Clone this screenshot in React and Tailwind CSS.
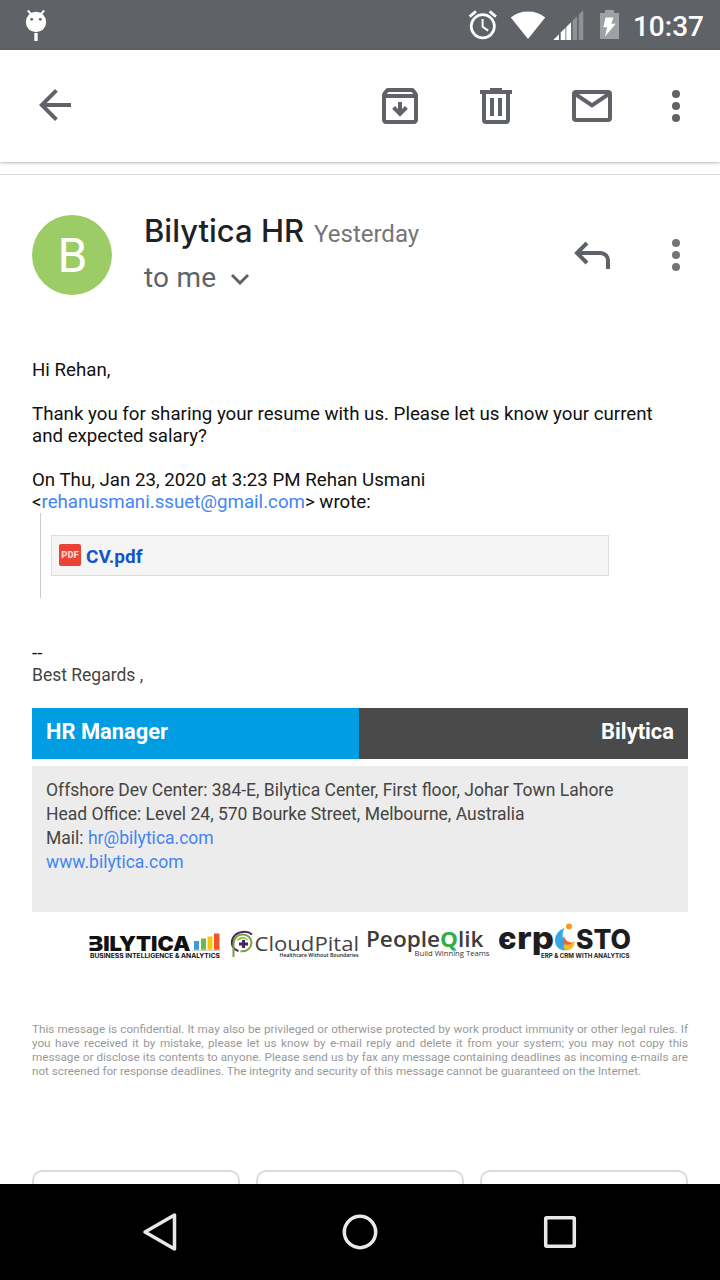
import React from "react";

const GREY = "#5f6368";

function StatusBar() {
  return (
    <header className="flex h-[50px] shrink-0 items-center justify-between bg-[#5f6267] pr-4 pl-6">
      <svg width="24" height="50" viewBox="24 0 24 50" fill="#fff">
        <circle cx="36" cy="22" r="10.2" />
        <path d="M31.5 14.5 28.3 11M40.5 14.5 43.7 11" stroke="#fff" strokeWidth="2" strokeLinecap="round" />
        <circle cx="31.7" cy="19.3" r="1.4" fill="#5f6267" />
        <circle cx="40.3" cy="19.3" r="1.4" fill="#5f6267" />
        <rect x="34.3" y="33" width="3.4" height="8" />
      </svg>
      <div className="flex items-center gap-[14px]">
        <svg width="151" height="50" viewBox="468 0 151 50">
          <g fill="none" stroke="#fff">
            <circle cx="482.8" cy="26.3" r="11.6" strokeWidth="2.7" />
            <path d="M482.6 19v7.8l5.6 3.8" strokeWidth="2" />
            <path d="M469.6 16.6 476 11.4M496 16.6 489.6 11.4" strokeWidth="2.8" />
          </g>
          <path d="M528 39 510.8 17.4a28 28 0 0 1 34.4 0z" fill="#fff" />
          <path d="M553.3 40 559 34.3V40zM560.7 40V32.6l4.8-4.8V40zM566.3 40V27l4.8-4.8V40z" fill="#fff" />
          <path d="M572.7 40V20.6l4.4-4.4V40zM578.7 40V14.6l4.6-4.6V40z" fill="#8f9194" />
          <path d="M600 13h5v-3h9v3h5v26h-19z" fill="#9fa1a4" />
          <path d="M605.5 17.5h8l-2.2 6.3h4.5L605 36.5l2.2-9.3h-3.8z" fill="#fff" />
        </svg>
        <span className="mt-[3px] text-[28px] leading-[32px] font-medium text-white">10:37</span>
      </div>
    </header>
  );
}

function Dots({ color }) {
  return (
    <svg width="8" height="32" viewBox="0 0 8 32" fill={color}>
      <circle cx="4" cy="4" r="4" />
      <circle cx="4" cy="16" r="4" />
      <circle cx="4" cy="28" r="4" />
    </svg>
  );
}

function Toolbar() {
  return (
    <nav className="flex h-[112px] shrink-0 items-center bg-white pr-10 pl-[31px] shadow-[0_1px_3px_rgba(0,0,0,0.28)]">
      <svg className="mb-[2px]" width="48" height="48" viewBox="0 0 24 24" fill={GREY}>
        <path d="M20 11H7.83l5.59-5.59L12 4l-8 8 8 8 1.41-1.41L7.83 13H20v-2z" />
      </svg>
      <div className="ml-auto flex items-center">
        <svg width="48" height="48" viewBox="0 0 48 48" fill="none" stroke={GREY} strokeWidth="4">
          <path
            transform="scale(2)"
            stroke="none"
            fill={GREY}
            d="M20.54 5.23l-1.39-1.68C18.88 3.21 18.47 3 18 3H6c-.47 0-.88.21-1.16.55L3.46 5.23C3.17 5.57 3 6.02 3 6.5V19c0 1.1.9 2 2 2h14c1.1 0 2-.9 2-2V6.5c0-.48-.17-.93-.46-1.27zM6.24 5h11.52l.83 1H5.42l.82-1zM5 19V8h14v11H5z"
          />
          <path d="M24 20v11M17.6 25.4 24 31.8l6.4-6.4" />
        </svg>
        <svg className="ml-12" width="48" height="48" viewBox="472 82 48 48" fill={GREY}>
          <path d="M480 90h10v-2h12v2h10v4h-32zM490 98h4v18h-4zM498 98h4v18h-4z" />
          <path d="M484 93v27a2 2 0 0 0 2 2h20a2 2 0 0 0 2-2V93" fill="none" stroke={GREY} strokeWidth="4" />
        </svg>
        <svg className="mr-14 ml-12" width="48" height="48" viewBox="568 82 48 48" fill="none" stroke={GREY} strokeWidth="4">
          <rect x="574" y="92" width="36" height="28" rx="2" />
          <path d="M574.5 93.5 592 105.4l17.5-11.9" />
        </svg>
        <Dots color={GREY} />
      </div>
    </nav>
  );
}

function Sender() {
  return (
    <section className="flex h-[184px] shrink-0 items-start border-t border-[#dcdcdc] pt-10 pr-10 pl-8">
      <div className="flex size-20 items-center justify-center rounded-full bg-[#9ccc65] pt-[2px] pl-px text-[48px] leading-[56px] text-white">
        B
      </div>
      <div className="-mt-0.5 ml-8 flex flex-col">
        <div className="flex items-baseline gap-[10px] leading-[36px] whitespace-nowrap">
          <span className="font-['Inter',sans-serif] text-[31px] font-[550] text-[#202124]">Bilytica HR</span>
          <span className="text-[24px] text-[#757575]">Yesterday</span>
        </div>
        <div className="mt-2 flex items-center gap-[15px] text-[28px] leading-[36px] text-[#5f6368]">
          <span className="tracking-[0.2px]">to me</span>
          <svg className="mt-[2px]" width="18" height="12" viewBox="231 273 18 12" fill="none" stroke={GREY} strokeWidth="3">
            <path d="M232 275 240 283l8-8" />
          </svg>
        </div>
      </div>
      <div className="ml-auto flex h-20 items-center gap-[61px]">
        <svg width="37" height="32" viewBox="574 239 37 32" fill="none" stroke={GREY} strokeWidth="4">
          <path d="M587 243 577 253l10 10M577 253h23.500a7.500 7.500 0 0 1 7.500 7.500V269" />
        </svg>
        <Dots color="#757575" />
      </div>
    </section>
  );
}

function Message() {
  return (
    <section className="flex flex-col text-[18.7px] leading-[22px] text-[#111]">
      <p>Hi Rehan,</p>
      <p className="mt-[22px]">
        Thank you for sharing your resume with us. Please let us know your current
        <br />
        and expected salary?
      </p>
      <p className="mt-[22px]">
        On Thu, Jan 23, 2020 at 3:23 PM Rehan Usmani
        <br />
        &lt;<span className="text-[#4285f4]">rehanusmani.ssuet@gmail.com</span>&gt; wrote:
      </p>
      <div className="ml-2 h-[85px] border-l border-[#ccc] pt-[22px] pl-[10px]">
        <div className="flex h-[41px] w-[558px] items-center gap-[5px] border border-[#ddd] bg-[#f5f5f5] pl-[7px]">
          <span className="mb-px flex size-[22px] items-center justify-center rounded-[2px] bg-[#ea4335] text-[9.5px] leading-none font-black text-[#fbd5d2]">
            PDF
          </span>
          <span className="mt-[3px] text-[19px] font-bold text-[#15c]">CV.pdf</span>
        </div>
      </div>
      <p className="mt-11">--</p>
      <p className="text-[17.5px] text-[#444]">Best Regards ,</p>
    </section>
  );
}

function Logos() {
  return (
    <div className="flex h-[48px] pl-[57px]">
      <svg width="133" height="48" viewBox="89 916 133 48">
        <g fontFamily="Inter, sans-serif" fontWeight="900" fill="#111">
          <text x="88.500" y="951" fontSize="20.500" textLength="102" lengthAdjust="spacingAndGlyphs">BILYTICA</text>
          <text x="90" y="958.200" fontSize="5.800" fontWeight="700" textLength="130" lengthAdjust="spacingAndGlyphs">BUSINESS INTELLIGENCE &amp; ANALYTICS</text>
        </g>
        <path d="M88.500 939.300h7.500v2.700h-7.500zM88.500 945.300h7.500v2.500h-7.500z" fill="#fff" />
        <path d="M194 941h5v8.800h-5z" fill="#3d9bd9" />
        <path d="M201 938.500h5v11.300h-5z" fill="#6abf3f" />
        <path d="M207.500 936.500h5v13.300h-5z" fill="#f9c80e" />
        <path d="M214 933.500h5.500v16.300H214z" fill="#f0542c" />
        <path d="M192 950.500h29" stroke="#bbb" strokeWidth=".7" />
      </svg>
      <svg className="ml-2" width="130" height="48" viewBox="230 916 130 48">
        <path d="M252 934.500c-5-4.500-15-3-18.500 2.500-3.500 6-1 12.500 5 14" fill="none" stroke="#45245f" strokeWidth="2" />
        <path d="M233.500 957V944c0-7 5-9.500 9-9.500 5.500 0 9 3.800 9 8.300s-4 8.400-9 8.400h-2" fill="none" stroke="#7ba23f" strokeWidth="2" />
        <path d="M236.500 941a6.500 6.500 0 0 1 12 0l-5-2.500z" fill="#8cbf3f" />
        <path d="M242 940h3v2.500h3v3h-3v2.500h-3v-2.500h-3v-3h3z" fill="#45245f" />
        <text x="254.500" y="950.500" fontSize="20.500" fontFamily="Open Sans, sans-serif" fill="#444" textLength="104.500" lengthAdjust="spacingAndGlyphs">CloudPital</text>
        <text x="279.500" y="957" fontSize="5.500" fontFamily="Open Sans, sans-serif" fontWeight="600" fill="#222" textLength="79" lengthAdjust="spacingAndGlyphs">Healthcare Without Boundaries</text>
      </svg>
      <svg className="ml-[7px]" width="124" height="48" viewBox="367 916 124 48">
        <text x="366" y="946.500" fontSize="21.500" fontFamily="Open Sans, sans-serif" fontWeight="600" fill="#3d3d3d" textLength="117.500" lengthAdjust="spacingAndGlyphs">People<tspan fill="#2fae4a" fontWeight="700">Q</tspan>lik</text>
        <text x="414.500" y="956.300" fontSize="6.800" fontFamily="Open Sans, sans-serif" fill="#333" textLength="75" lengthAdjust="spacingAndGlyphs">Build Winning Teams</text>
      </svg>
      <svg className="ml-2" width="133" height="48" viewBox="499 916 133 48">
        <g fontFamily="Inter, sans-serif" fontWeight="800" fill="#1d1d1f">
          <text x="498" y="948.500" fontSize="31" textLength="18.500" lengthAdjust="spacingAndGlyphs">є</text>
          <text x="517" y="948.500" fontSize="31" textLength="37" lengthAdjust="spacingAndGlyphs">rp</text>
          <text x="576" y="948.500" fontSize="26.500" textLength="55" lengthAdjust="spacingAndGlyphs">STO</text>
          <text x="541" y="957.600" fontSize="5.600" fontWeight="700" textLength="88.500" lengthAdjust="spacingAndGlyphs">ERP &amp; CRM WITH ANALYTICS</text>
        </g>
        <circle cx="569" cy="926.500" r="3" fill="#f59c1a" />
        <path d="M564.500 928c-6 2-9.500 7-9.500 12.500 0 6 4.500 10 11 10 2-2.500 1.500-5-1-8s-3.500-9-.5-14.500z" fill="#35a7e6" />
        <path d="M574.500 941c.5 5.500-3 9.500-8.500 9.500-2.500-1.500-3-4-1.500-6.500 3 1 7-.2 10-3z" fill="#f9b92e" />
        <path d="M564 936c1 4 4.500 7 9 6.500-2.500 2.500-7 3-9 1-1.500-2-1.500-5 0-7.500z" fill="#ee6a2c" />
      </svg>
    </div>
  );
}

function Signature() {
  return (
    <section className="mt-[22px] flex flex-col">
      <div className="flex h-[51px] text-[21.9px] leading-[26px] font-bold text-white">
        <div className="w-[327px] bg-[#009de2] pt-[11px] pl-[14px]">HR Manager</div>
        <div className="flex-1 bg-[#4a4a4a] pt-[11px] pr-[14px] text-right">Bilytica</div>
      </div>
      <div className="mt-[7px] h-[146px] bg-[#ececec] pt-3 pl-[14px] text-[17.52px] leading-[24px] text-[#444]">
        <p>Offshore Dev Center: 384-E, Bilytica Center, First floor, Johar Town Lahore</p>
        <p>Head Office: Level 24, 570 Bourke Street, Melbourne, Australia</p>
        <p>
          Mail: <span className="text-[#4285f4]">hr@bilytica.com</span>
        </p>
        <p className="text-[#4285f4]">www.bilytica.com</p>
      </div>
      <div className="mt-1">
        <Logos />
      </div>
    </section>
  );
}

const DISCLAIMER = [
  "This message is confidential. It may also be privileged or otherwise protected by work product immunity or other legal rules. If",
  "you have received it by mistake, please let us know by e-mail reply and delete it from your system; you may not copy this",
  "message or disclose its contents to anyone. Please send us by fax any message containing deadlines as incoming e-mails are",
];

function Disclaimer() {
  return (
    <section className="mt-[58px] text-[11.69px] leading-[14px] text-[#999]">
      {DISCLAIMER.map((line) => (
        <p key={line} className="[text-align-last:justify]">
          {line}
        </p>
      ))}
      <p>not screened for response deadlines. The integrity and security of this message cannot be guaranteed on the Internet.</p>
    </section>
  );
}

function NavigationBar() {
  return (
    <footer className="flex h-24 shrink-0 items-center justify-center gap-[160px] bg-black">
      <svg width="40" height="40" viewBox="140 1212 40 40" fill="none" stroke="#e8e8e8" strokeWidth="3.500" strokeLinejoin="round">
        <path d="M145 1232 174.500 1215v34z" />
      </svg>
      <svg width="40" height="40" viewBox="340 1212 40 40" fill="none" stroke="#e8e8e8" strokeWidth="3.500">
        <circle cx="360" cy="1232" r="15.700" />
      </svg>
      <svg width="40" height="40" viewBox="540 1212 40 40" fill="none" stroke="#e8e8e8" strokeWidth="3.500">
        <rect x="545.700" y="1217.700" width="28.600" height="28.600" rx="1" />
      </svg>
    </footer>
  );
}

export default function App() {
  return (
    <div className="flex h-[1280px] w-[720px] flex-col overflow-hidden bg-white font-['Roboto',sans-serif]">
      <StatusBar />
      <Toolbar />
      <main className="flex min-h-0 flex-1 flex-col overflow-hidden pt-3">
        <Sender />
        <div className="flex flex-col px-8 pt-px">
          <Message />
          <Signature />
          <Disclaimer />
          <div className="mt-[92px] grid grid-cols-3 gap-4">
            <div className="h-[72px] rounded-[10px] border-2 border-[#dadce0]" />
            <div className="h-[72px] rounded-[10px] border-2 border-[#dadce0]" />
            <div className="h-[72px] rounded-[10px] border-2 border-[#dadce0]" />
          </div>
        </div>
      </main>
      <NavigationBar />
    </div>
  );
}
